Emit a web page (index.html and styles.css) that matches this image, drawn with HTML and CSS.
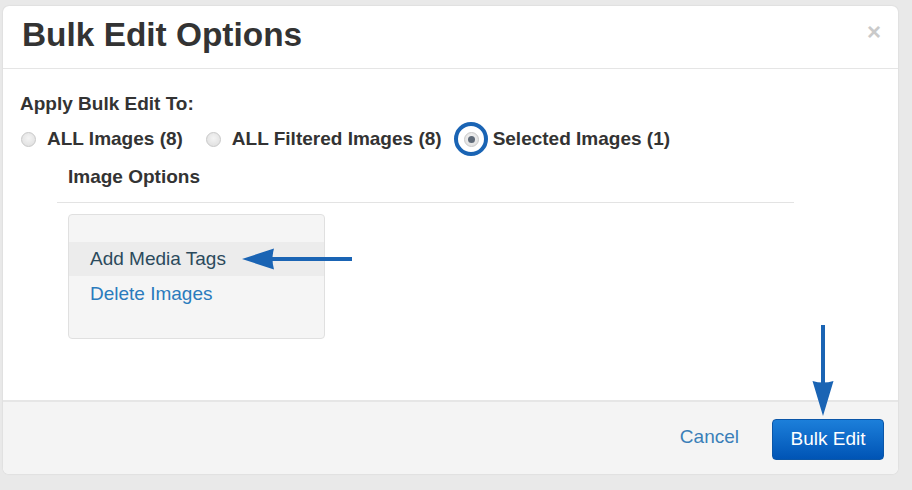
FILE: index.html
```html
<!DOCTYPE html>
<html>
<head>
<meta charset="utf-8">
<link rel="stylesheet" href="styles.css">
</head>
<body>
<div class="modal">
  <div class="modal-header">
    <h1 class="title">Bulk Edit Options</h1>
    <span class="close">&times;</span>
  </div>
  <div class="modal-body">
    <div class="apply-label">Apply Bulk Edit To:</div>
    <div class="radio-row">
      <label class="radio"><span class="dot"></span>ALL Images (8)</label>
      <label class="radio"><span class="dot"></span>ALL Filtered Images (8)</label>
      <label class="radio selected"><span class="dot checked"><span class="ring"></span></span>Selected Images (1)</label>
    </div>
    <div class="options">
      <div class="options-title">Image Options</div>
      <div class="rule"></div>
      <div class="menu">
        <div class="menu-item active">Add Media Tags
          <svg class="arrow-left" width="112" height="24" viewBox="0 0 112 24"><path d="M0 12 L32 1.5 Q29 12 32 22.5 Z" fill="#1a64b4"/><rect x="28" y="10" width="82" height="4" fill="#1a64b4"/></svg>
        </div>
        <div class="menu-item link">Delete Images</div>
      </div>
    </div>
  </div>
  <div class="modal-footer">
    <svg class="arrow-down" width="24" height="92" viewBox="0 0 24 92"><rect x="10" y="0" width="4" height="62" fill="#1a64b4"/><path d="M12 91 L1.5 56 Q12 59 22.5 56 Z" fill="#1a64b4"/></svg>
    <a class="cancel">Cancel</a>
    <button class="btn-primary">Bulk Edit</button>
  </div>
</div>
</body>
</html>
```

FILE: styles.css
```css
html, body {
  margin: 0;
  padding: 0;
  background: #e9e9e9;
}
body {
  font-family: "Liberation Sans", Arial, sans-serif;
  color: #333;
  height: 490px;
  overflow: hidden;
}
.modal {
  margin: 6px 0 0 3px;
  width: 895px;
  height: 468px;
  background: #fff;
  border-radius: 6px;
  box-shadow: 0 0 2px rgba(0,0,0,0.12);
  display: flex;
  flex-direction: column;
  overflow: hidden;
}
.modal-header {
  height: 62px;
  border-bottom: 1px solid #e5e5e5;
  display: flex;
  align-items: center;
  justify-content: space-between;
  padding: 0 17px 0 19px;
}
.title {
  margin: 0;
  font-size: 33.4px;
  font-weight: bold;
  color: #333;
  line-height: 36px;
  position: relative;
  top: -2px;
}
.close {
  font-size: 24px;
  font-weight: bold;
  color: #cacaca;
  line-height: 24px;
  position: relative;
  top: -5px;
}
.modal-body {
  height: 331px;
  padding: 24px 0 0 17px;
  box-sizing: border-box;
}
.apply-label {
  font-size: 19px;
  font-weight: bold;
  line-height: 22px;
}
.radio-row {
  margin-top: 13px;
  display: flex;
  align-items: center;
  height: 22px;
}
.radio {
  display: flex;
  align-items: center;
  font-size: 19px;
  font-weight: bold;
  line-height: 22px;
  margin-right: 22px;
}
.radio.selected {
  margin-right: 0;
}
.dot {
  width: 13px;
  height: 13px;
  border-radius: 50%;
  border: 1px solid #c8c8c8;
  background: radial-gradient(circle at 50% 40%, #f4f4f4, #dcdcdc);
  margin: 0 11px 0 1px;
  position: relative;
  flex: none;
}
.radio.selected .dot {
  margin: 0 14px 0 0;
}
.dot.checked::after {
  content: "";
  position: absolute;
  left: 3px;
  top: 3px;
  width: 7px;
  height: 7px;
  border-radius: 50%;
  background: #5f6a78;
}
.ring {
  position: absolute;
  left: -10.5px;
  top: -11px;
  width: 26px;
  height: 26px;
  border: 4px solid #1a64b4;
  border-radius: 50%;
}
.options {
  margin: 16px 0 0 37px;
  width: 737px;
}
.options-title {
  font-size: 19px;
  font-weight: bold;
  line-height: 22px;
  padding-left: 11px;
}
.rule {
  margin-top: 14px;
  height: 1px;
  background: #e3e3e3;
}
.menu {
  margin: 11px 0 0 11px;
  width: 255px;
  height: 96px;
  border: 1px solid #e0e0e0;
  border-radius: 4px;
  background: #f5f5f5;
  padding-top: 27px;
}
.menu-item {
  height: 34px;
  line-height: 34px;
  padding-left: 21px;
  font-size: 19px;
  position: relative;
}
.menu-item.active {
  background: #ececec;
  color: #2b4a5c;
}
.menu-item.link {
  color: #2a7bbd;
  height: 36px;
  line-height: 36px;
}
.arrow-left {
  position: absolute;
  left: 173px;
  top: 5px;
}
.modal-footer {
  flex: 1;
  background: #f4f4f4;
  border-top: 2px solid #e6e6e6;
  display: flex;
  align-items: center;
  justify-content: flex-end;
  padding: 0 14px 0 0;
  position: relative;
}
.arrow-down {
  position: absolute;
  left: 808px;
  top: -77px;
}
.cancel {
  font-size: 19px;
  color: #3a7fb8;
  margin-right: 33px;
  position: relative;
  top: -1px;
}
.btn-primary {
  font-family: "Liberation Sans", Arial, sans-serif;
  font-size: 19px;
  color: #fff;
  width: 112px;
  height: 41px;
  border: 1px solid #0a56a8;
  border-radius: 4px;
  background: linear-gradient(#1c7fda, #0054b5);
  padding: 0;
  position: relative;
  top: 1px;
}
```
